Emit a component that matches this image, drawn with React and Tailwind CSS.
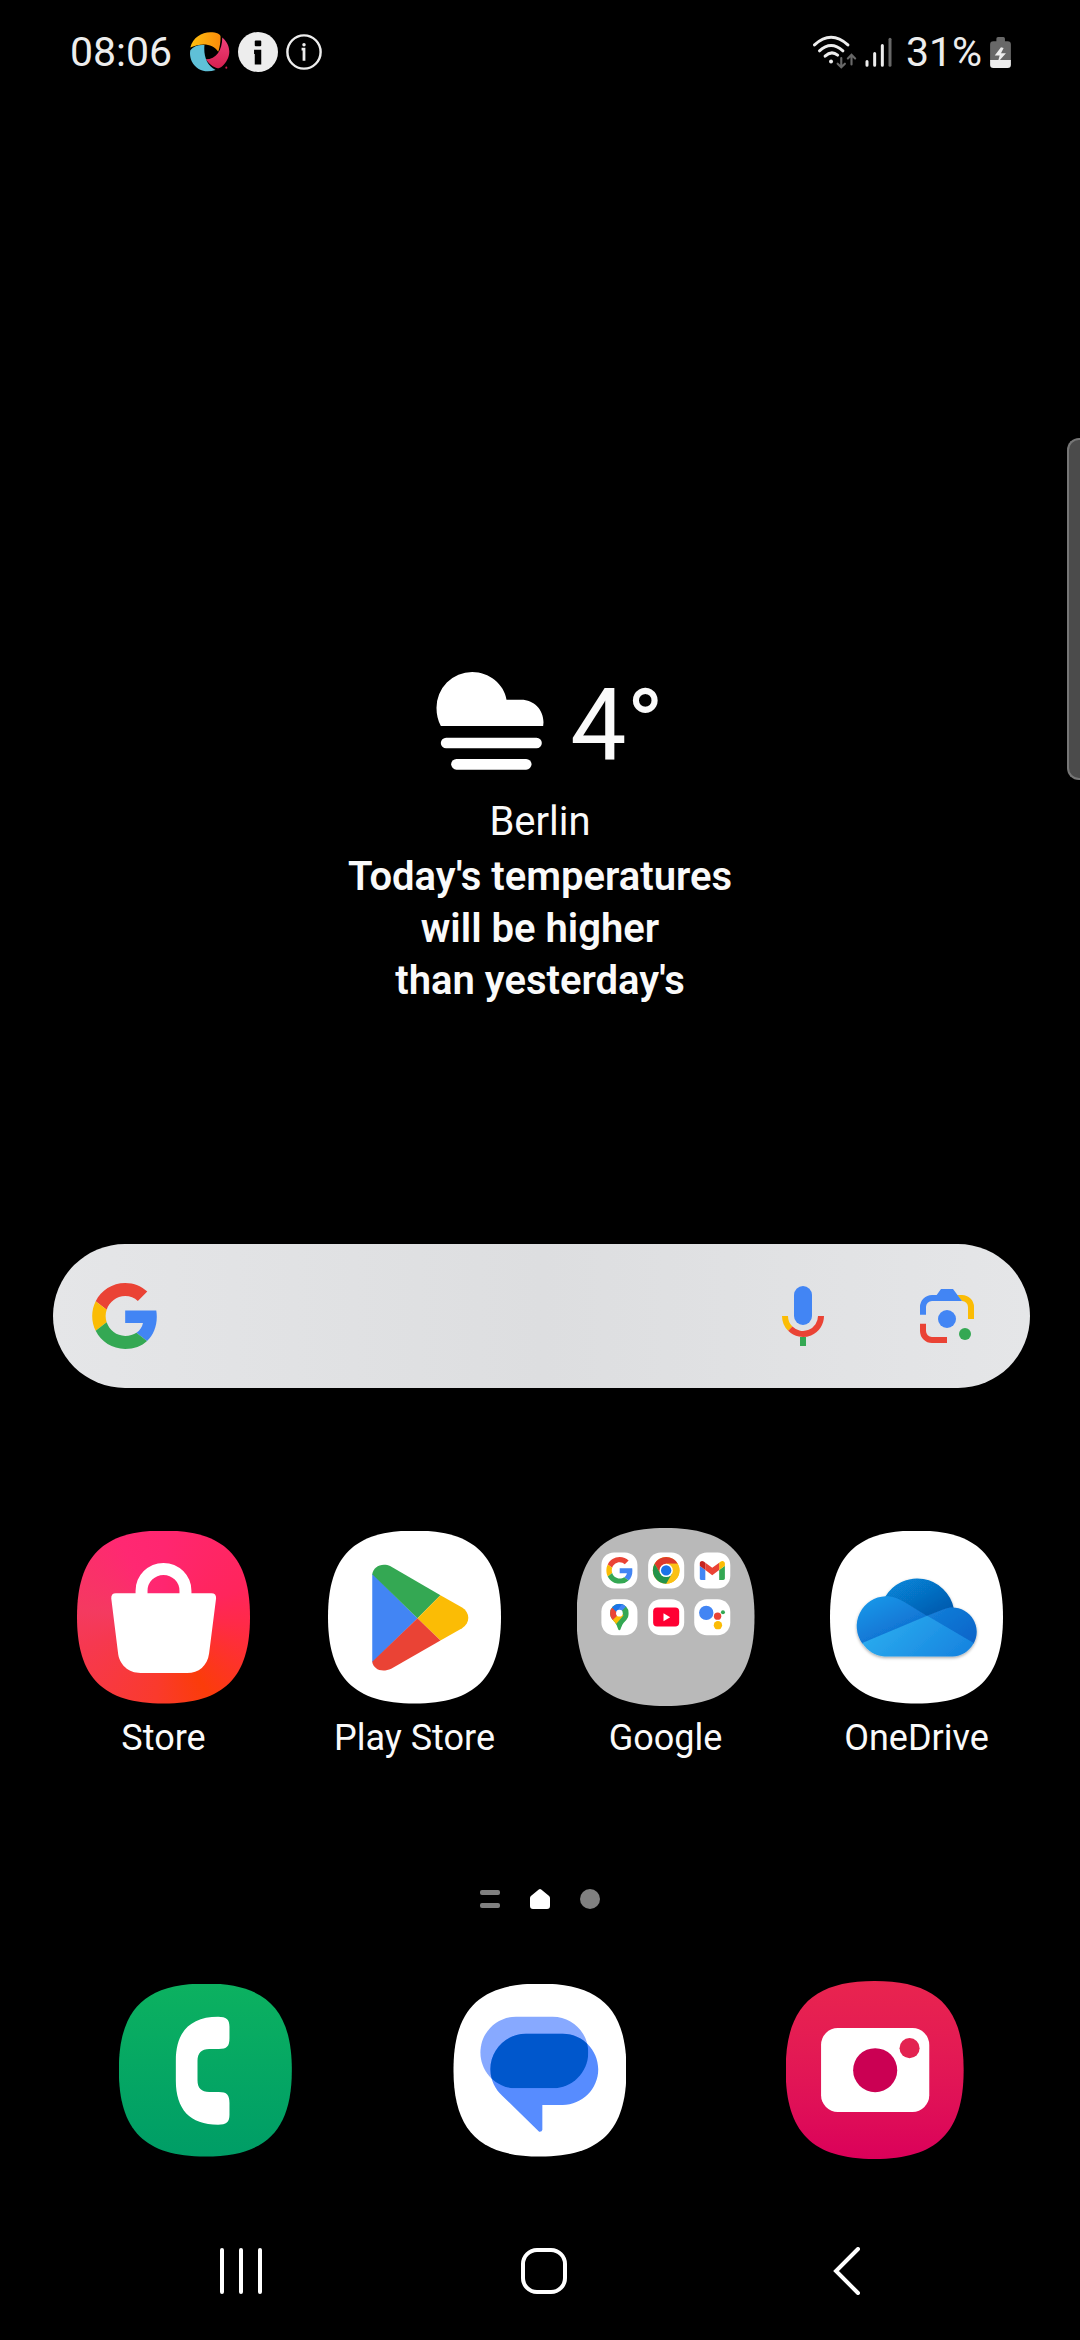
import React from "react";

const SQUIRCLE =
  "M0 .5C0 .15 .15 0 .5 0S1 .15 1 .5S.85 1 .5 1S0 .85 0 .5Z";

function SharedDefs() {
  return (
    <svg className="absolute h-0 w-0" aria-hidden="true">
      <defs>
        <clipPath id="squircle" clipPathUnits="objectBoundingBox">
          <path d={SQUIRCLE} />
        </clipPath>
      </defs>
    </svg>
  );
}

function GoogleG(props) {
  return (
    <svg viewBox="0 0 47 48" aria-hidden="true" {...props}>
      <path fill="#EA4335" d="M24 9.5c3.54 0 6.71 1.22 9.21 3.6l6.85-6.85C35.9 2.38 30.47 0 24 0 14.62 0 6.51 5.38 2.56 13.22l7.98 6.19C12.43 13.72 17.74 9.5 24 9.5z" />
      <path fill="#4285F4" d="M46.98 24.55c0-1.57-.15-3.09-.38-4.55H24v9.02h12.94c-.58 2.96-2.26 5.48-4.78 7.18l7.73 6c4.51-4.18 7.09-10.36 7.09-17.65z" />
      <path fill="#FBBC05" d="M10.53 28.59c-.48-1.45-.76-2.99-.76-4.59s.27-3.14.76-4.59l-7.98-6.19C.92 16.46 0 20.12 0 24c0 3.88.92 7.54 2.56 10.78l7.97-6.19z" />
      <path fill="#34A853" d="M24 48c6.48 0 11.93-2.13 15.89-5.81l-7.73-6c-2.15 1.45-4.92 2.3-8.16 2.3-6.26 0-11.57-4.22-13.47-9.91l-7.98 6.19C6.51 42.62 14.62 48 24 48z" />
    </svg>
  );
}

function PinwheelIcon() {
  return (
    <svg viewBox="420 38 119 119" className="size-10" aria-hidden="true">
      <defs>
        <linearGradient id="pw-o" x1="0" x2="1">
          <stop offset="0" stopColor="#fdc010" />
          <stop offset="1" stopColor="#fb8c0a" />
        </linearGradient>
        <linearGradient id="pw-p" x1="0" y1="0" x2="0" y2="1">
          <stop offset="0" stopColor="#f0417c" />
          <stop offset="1" stopColor="#d5204f" />
        </linearGradient>
      </defs>
      <path fill="url(#pw-o)" d="M421 84C428 55 455 39 480 39C500 39 511 45 511 52C511 70 508 85 504 97C488 72 455 70 421 84Z" />
      <path fill="url(#pw-p)" d="M516 54C538 72 542 100 531 120C521 140 508 147 502 146C490 143 475 132 467 119C498 119 516 92 516 54Z" />
      <path fill="#5fc0d8" d="M421 92C430 80 447 75 463 77C460 110 470 138 496 151C470 160 440 155 425 125C420 115 419 100 421 92Z" />
      <circle cx="528" cy="144" r="3" fill="#c81e4c" />
    </svg>
  );
}

function InfoFilledIcon() {
  return (
    <svg viewBox="0 0 117 117" className="size-10" aria-hidden="true">
      <circle cx="58.5" cy="58.5" r="58.5" fill="#ededed" />
      <rect x="49" y="25" width="19" height="17" rx="3" fill="#000" />
      <path fill="#000" d="M47 52H68V95H49V64H47Z" />
    </svg>
  );
}

function InfoOutlineIcon() {
  return (
    <svg viewBox="0 0 104 104" className="size-9" fill="none" aria-hidden="true">
      <circle cx="52" cy="52" r="48" stroke="#ededed" strokeWidth="7" />
      <circle cx="52" cy="31" r="5" fill="#ededed" />
      <path d="M45 44H52V77" stroke="#ededed" strokeWidth="8" />
    </svg>
  );
}

function WifiIcon() {
  return (
    <svg viewBox="60 42 135 103" className="h-[34px] w-[45px]" fill="none" strokeLinecap="round" aria-hidden="true">
      <g stroke="#ededed" strokeWidth="9">
        <path d="M67 72Q117 26 168 72" />
        <path d="M82 90Q117 58 153 90" />
        <path d="M99 106Q118 88 137 103" />
      </g>
      <circle cx="117" cy="122" r="6" fill="#ededed" />
      <g stroke="#686868" strokeWidth="6.5">
        <path d="M148 112V139M137 129L148 140L159 129" />
        <path d="M179 131V103M168 113L179 102L190 113" />
      </g>
    </svg>
  );
}

function SignalIcon() {
  return (
    <svg viewBox="222 50 81 89" className="h-[30px] w-[27px]" strokeLinecap="round" strokeWidth="9" aria-hidden="true">
      <path stroke="#ededed" d="M228 123V134M251 99V134M274 75V134" />
      <path stroke="#686868" d="M297 56V134" />
    </svg>
  );
}

function BatteryIcon() {
  return (
    <svg viewBox="597 47 63 94" className="h-[31px] w-[21px]" aria-hidden="true">
      <path fill="#686868" d="M616 52Q616 47 621 47H637Q642 47 642 52V60H650Q660 60 660 70V118H597V70Q597 60 607 60H616Z" />
      <path fill="#ededed" d="M597 117H660V131Q660 141 650 141H607Q597 141 597 131Z" />
      <path fill="#ededed" d="M630 78L611 103H626L620 124L645 96H630L638 80Z" />
    </svg>
  );
}

function StatusBar() {
  return (
    <header className="flex h-12 items-center justify-between pr-[69px] pl-[70px] text-[41px] leading-[48px] text-[#ededed]">
      <div className="flex items-center gap-2">
        <time className="mr-2.5">08:06</time>
        <PinwheelIcon />
        <InfoFilledIcon />
        <InfoOutlineIcon />
      </div>
      <div className="flex items-center gap-2">
        <WifiIcon />
        <SignalIcon />
        <span className="ml-1.5">31%</span>
        <BatteryIcon />
      </div>
    </header>
  );
}

function FogIcon() {
  return (
    <svg viewBox="349 66 323 294" className="h-[98px] w-[108px]" fill="#fff" aria-hidden="true">
      <path d="M363 228C354 211 350 193 350 174A107 107 0 0 1 457 66C508 66 553 103 560 149H604C642 149 671 178 671 217L670 228Z" />
      <rect x="363" y="263" width="303" height="32" rx="16" />
      <rect x="394" y="327" width="241" height="32" rx="16" />
    </svg>
  );
}

function Weather() {
  return (
    <section className="mt-[596px] flex flex-col items-center text-center text-[40px] text-[#fafafa]">
      <div className="flex items-start gap-[26px] pl-5">
        <FogIcon />
        <span className="text-[100px] leading-[108px]">4°</span>
      </div>
      <p className="mt-[18px] leading-[48px]">Berlin</p>
      <p className="mt-[5px] leading-[52px] font-semibold">
        Today's temperatures
        <br />
        will be higher
        <br />
        than yesterday's
      </p>
    </section>
  );
}

function MicIcon() {
  return (
    <svg viewBox="663 168 126 180" className="h-[60px] w-[42px]" fill="none" aria-hidden="true">
      <rect x="699" y="168" width="54" height="117" rx="27" fill="#4285F4" />
      <path d="M672 258A54 54 0 0 0 687.8 296.2" stroke="#FBBC05" strokeWidth="18" />
      <path d="M687.8 296.2A54 54 0 0 0 780 258" stroke="#EA4335" strokeWidth="18" />
      <rect x="717" y="321" width="18" height="27" fill="#34A853" />
    </svg>
  );
}

function LensIcon() {
  return (
    <svg viewBox="1077 177 162 162" className="size-[54px]" fill="none" aria-hidden="true">
      <path fill="#FBBC05" d="M1188 195H1203A36 36 0 0 1 1239 231V267H1221V231A18 18 0 0 0 1203 213Z" />
      <path fill="#4285F4" d="M1077 254V231A36 36 0 0 1 1113 195H1127L1140 177H1176L1203 213H1113A18 18 0 0 0 1095 231V254Z" />
      <path d="M1086 281V303A27 27 0 0 0 1113 330H1158" stroke="#EA4335" strokeWidth="18" />
      <circle cx="1158" cy="267" r="27" fill="#4285F4" />
      <circle cx="1212" cy="312" r="18" fill="#34A853" />
    </svg>
  );
}

function SearchBar() {
  return (
    <form
      role="search"
      className="mr-[50px] ml-[53px] mt-[237px] flex h-36 items-center rounded-[72px] bg-linear-to-r from-[#e5e6e8] via-[#dddee0] to-[#e5e6e8] pr-14 pl-[39px]"
      onSubmit={(e) => e.preventDefault()}
    >
      <GoogleG className="h-[66px] w-[65px]" />
      <input type="search" aria-label="Search" className="h-full min-w-0 flex-1 bg-transparent px-6 text-[40px] text-neutral-800 outline-none" />
      <button type="button" aria-label="Voice search">
        <MicIcon />
      </button>
      <button type="button" aria-label="Search with Lens" className="ml-24">
        <LensIcon />
      </button>
    </form>
  );
}

function StoreArt() {
  return (
    <svg viewBox="49 60 520 520" className="size-full" aria-hidden="true">
      <path d="M243 252V240A66 66 0 0 1 375 240V252" fill="none" stroke="#fff" strokeWidth="36" />
      <path fill="#fff" d="M166 247H453Q468 247 467 263L446 428C441 465 415 487 380 487H240C205 487 175 463 172 424L152 263Q151 247 166 247Z" />
    </svg>
  );
}

function PlayArt() {
  return (
    <svg viewBox="802 60 520 520" className="size-full" aria-hidden="true">
      <path fill="#4285F4" d="M935 188L1071 322L935 455Z" />
      <path fill="#34A853" d="M935 190C938 168 963 154 990 166L1140 253L1071 322Z" />
      <path fill="#FBBC05" d="M1140 253L1205 290C1230 305 1230 337 1205 352L1140 389L1071 322Z" />
      <path fill="#EA4335" d="M1140 389L992 474C963 487 938 475 935 453L1071 322Z" />
    </svg>
  );
}

function FolderArt() {
  const cells = [
    [121, 127],
    [261, 127],
    [399, 127],
    [121, 267],
    [261, 267],
    [399, 267],
  ];
  const blade = "M-34.6 -20A40 40 0 0 1 34.6 -20H0L-17.3 10Z";
  return (
    <svg viewBox="48 54 533 533" className="size-full" aria-hidden="true">
      <defs>
        <clipPath id="pin">
          <path d="M175 361C171 361 170 348 162 337C154 327 147 322 147 309A28 28 0 0 1 203 309C203 322 196 329 188 338C180 348 179 361 175 361Z" />
        </clipPath>
      </defs>
      {cells.map(([x, y]) => (
        <rect key={x + "-" + y} x={x} y={y} width="108" height="108" rx="38" fill="#fff" />
      ))}
      <GoogleG x="135" y="141" width="80" height="80" />
      <g transform="translate(315 181)">
        <circle r="40" fill="#fbc116" />
        <path d={blade} fill="#dd3a2c" />
        <path d={blade} fill="#fbc116" transform="rotate(120)" />
        <path d={blade} fill="#23934a" transform="rotate(240)" />
        <circle r="20" fill="#fff" />
        <circle r="15.5" fill="#1a73e8" />
      </g>
      <svg x="415" y="152" width="76" height="58" viewBox="52 42 88 66">
        <path fill="#4285f4" d="M58 108h14V74L52 59v43c0 3.32 2.69 6 6 6" />
        <path fill="#34a853" d="M120 108h14c3.32 0 6-2.69 6-6V59l-20 15" />
        <path fill="#fbbc04" d="M120 48v26l20-15v-8c0-7.42-8.47-11.65-14.4-7.2" />
        <path fill="#ea4335" d="M72 74V48l24 18 24-18v26L96 92" />
        <path fill="#c5221f" d="M52 51v8l20 15V48l-5.6-4.2c-5.94-4.45-14.4-.22-14.4 7.2" />
      </svg>
      <g clipPath="url(#pin)">
        <rect x="145" y="280" width="62" height="82" fill="#34A853" />
        <path fill="#FBBC05" d="M145 334L175 300L187 316L158 350Z" />
        <path fill="#EA4335" d="M145 286L175 310L148 336Z" />
        <path fill="#1a73e8" d="M150 288L160 276H190V290L168 308Z" />
        <path fill="#4285F4" d="M198 286L172 312L166 306L184 280Z" />
      </g>
      <circle cx="175" cy="309" r="10" fill="#fff" />
      <rect x="276" y="292" width="78" height="57" rx="12" fill="#ff0033" />
      <path fill="#fff" d="M307 309L327 321L307 333Z" />
      <circle cx="435" cy="308" r="21.5" fill="#4285F4" />
      <circle cx="469" cy="318" r="11" fill="#EA4335" />
      <circle cx="485" cy="306" r="6" fill="#34A853" />
      <circle cx="470" cy="345" r="12.5" fill="#FBBC05" />
    </svg>
  );
}

function OneDriveArt() {
  return (
    <svg viewBox="808 60 520 520" className="size-full" aria-hidden="true">
      <defs>
        <linearGradient id="od-top" x1="0" y1="0" x2="1" y2="1">
          <stop offset="0.1" stopColor="#0785d8" />
          <stop offset="0.9" stopColor="#0558ac" />
        </linearGradient>
        <linearGradient id="od-left" x1="0" y1="0" x2="0.7" y2="1">
          <stop offset="0" stopColor="#1b9cec" />
          <stop offset="1" stopColor="#0d68cc" />
        </linearGradient>
        <linearGradient id="od-right" x1="0" y1="0" x2="1" y2="1">
          <stop offset="0" stopColor="#1480da" />
          <stop offset="1" stopColor="#0863c8" />
        </linearGradient>
        <linearGradient id="od-bottom" x1="0" y1="0.6" x2="1" y2="1">
          <stop offset="0" stopColor="#2aaaee" />
          <stop offset="1" stopColor="#1580de" />
        </linearGradient>
        <filter id="od-shadow" x="-10%" y="-10%" width="120%" height="130%">
          <feDropShadow dx="0" dy="4" stdDeviation="5" floodColor="#000" floodOpacity="0.35" />
        </filter>
      </defs>
      <g filter="url(#od-shadow)">
        <path fill="url(#od-top)" d="M974 258A112 112 0 0 1 1180 292L1100 320L1010 270Z" />
        <path fill="url(#od-left)" d="M905 398A90 90 0 0 1 975 256C998 256 1015 264 1030 273L1101 316L1060 360Z" />
        <path fill="url(#od-right)" d="M1100 315L1146 297C1158 291 1168 290 1176 290A73 73 0 0 1 1240 398L1130 370Z" />
        <path fill="url(#od-bottom)" d="M905 397L1100 315L1240 397A73 73 0 0 1 1176 437H972C944 437 920 420 905 397Z" />
      </g>
    </svg>
  );
}

function PhoneArt() {
  return (
    <svg viewBox="51 370 487 519" preserveAspectRatio="none" className="size-full" aria-hidden="true">
      <path fill="#fff" d="M330 468C353 468 362 476 362 498V532C362 557 355 565 332 565H305C283 565 272 577 272 601V659C272 683 283 694 305 694H332C355 694 362 703 362 727V762C362 784 353 792 330 792C250 792 211 745 211 660V600C211 515 250 468 330 468Z" />
    </svg>
  );
}

function MessagesArt() {
  const back = "M1164 468H1267C1322 468 1367 516 1367 575.5S1322 683 1267 683H1164C1109 683 1064 635 1064 575.5S1109 468 1164 468Z";
  const front =
    "M1192 519H1295C1350 519 1395 567 1395 626S1350 733 1295 733H1238V807Q1237 814 1229 813L1126 706C1105 686 1092 658 1092 626C1092 567 1137 519 1192 519Z";
  return (
    <svg viewBox="987 370 486 519" preserveAspectRatio="none" className="size-full" aria-hidden="true">
      <defs>
        <clipPath id="bubble">
          <path d={back} />
        </clipPath>
      </defs>
      <path d={back} fill="#87a9ff" />
      <path d={front} fill="#578cff" />
      <path d={front} fill="#0057cc" clipPath="url(#bubble)" />
    </svg>
  );
}

function CameraArt() {
  return (
    <svg viewBox="492 363 533 533" className="size-full" aria-hidden="true">
      <rect x="597" y="504" width="324" height="251" rx="50" fill="#fff" />
      <circle cx="759" cy="630" r="66" fill="#cb0053" />
      <circle cx="862" cy="564" r="30" fill="#e32351" />
    </svg>
  );
}

const apps = [
  {
    name: "Store",
    Art: StoreArt,
    tile: "size-[173px] bg-[conic-gradient(#ff2670_0deg,#ff255c_70deg,#ff2a48_95deg,#fb3c0a_150deg,#fa3a2c_185deg,#f63850_250deg,#f43a60_275deg,#ff2872_330deg,#ff2670_360deg)]",
  },
  { name: "Play Store", Art: PlayArt, tile: "size-[173px] bg-white" },
  { name: "Google", Art: FolderArt, tile: "size-[178px] bg-[#b9b9b9]" },
  { name: "OneDrive", Art: OneDriveArt, tile: "size-[173px] bg-white" },
];

const dock = [
  { name: "Phone", Art: PhoneArt, tile: "size-[173px] bg-linear-to-b from-[#0cb160] to-[#009d66]" },
  { name: "Messages", Art: MessagesArt, tile: "size-[173px] bg-white" },
  { name: "Camera", Art: CameraArt, tile: "size-[178px] bg-linear-to-b from-[#e9244f] to-[#db005a]" },
];

function AppIcon({ app, showLabel }) {
  const { Art } = app;
  return (
    <button type="button" aria-label={app.name} className="flex flex-col items-center">
      <span className="flex h-[178px] items-center">
        <span className={"block [clip-path:url(#squircle)] " + app.tile}>
          <Art />
        </span>
      </span>
      {showLabel && <span className="mt-2.5 text-[36px] leading-[44px] text-[#fafafa]">{app.name}</span>}
    </button>
  );
}

function PageIndicator() {
  return (
    <div className="mt-[129px] flex h-5 items-center justify-center gap-[30px]">
      <button type="button" aria-label="Feed page" className="flex h-5 w-5 flex-col justify-between py-px">
        <span className="h-[5px] w-full rounded-xs bg-[#808080]" />
        <span className="h-[5px] w-full rounded-xs bg-[#808080]" />
      </button>
      <button type="button" aria-label="Home page" aria-current="page">
        <svg viewBox="0 0 20 20" className="size-5" fill="#fff" aria-hidden="true">
          <path d="M8.8 .6Q10 -.4 11.2 .6L18.8 6.8Q20 7.8 20 9V17Q20 20 17 20H3Q0 20 0 17V9Q0 7.8 1.2 6.8Z" />
        </svg>
      </button>
      <button type="button" aria-label="Page 2" className="size-5 rounded-full bg-[#808080]" />
    </div>
  );
}

function NavBar() {
  return (
    <nav className="mt-[88px] mb-11 grid grid-cols-3 justify-items-center pr-[82px] pl-[90px]">
      <button type="button" aria-label="Recent apps">
        <svg viewBox="0 0 44 48" className="h-12 w-11" stroke="#fff" strokeWidth="4" strokeLinecap="round" aria-hidden="true">
          <path d="M3 3V45M22 3V45M41 3V45" />
        </svg>
      </button>
      <button type="button" aria-label="Home">
        <svg viewBox="0 0 48 48" className="size-12" fill="none" stroke="#fff" strokeWidth="4" aria-hidden="true">
          <rect x="3" y="3" width="42" height="42" rx="14" />
        </svg>
      </button>
      <button type="button" aria-label="Back">
        <svg viewBox="0 0 28 48" className="h-12 w-7" fill="none" stroke="#fff" strokeWidth="4" strokeLinecap="round" aria-hidden="true">
          <path d="M25 2L3 24L25 46" />
        </svg>
      </button>
    </nav>
  );
}

export default function App() {
  return (
    <div className="relative flex min-h-screen flex-col overflow-hidden bg-black pt-7 font-['Roboto',sans-serif]">
      <SharedDefs />
      <StatusBar />
      <button
        type="button"
        aria-label="Open edge panel"
        className="absolute top-[438px] right-0 h-[342px] w-[13px] rounded-l-xl border-2 border-r-0 border-[#767676] bg-[#4b4b4b]"
      />
      <Weather />
      <SearchBar />
      <main className="mt-[140px] grid grid-cols-4 px-[38px]">
        {apps.map((app) => (
          <AppIcon key={app.name} app={app} showLabel />
        ))}
      </main>
      <PageIndicator />
      <div className="mt-[72px] grid grid-cols-3 px-[38px]">
        {dock.map((app) => (
          <AppIcon key={app.name} app={app} />
        ))}
      </div>
      <NavBar />
    </div>
  );
}
